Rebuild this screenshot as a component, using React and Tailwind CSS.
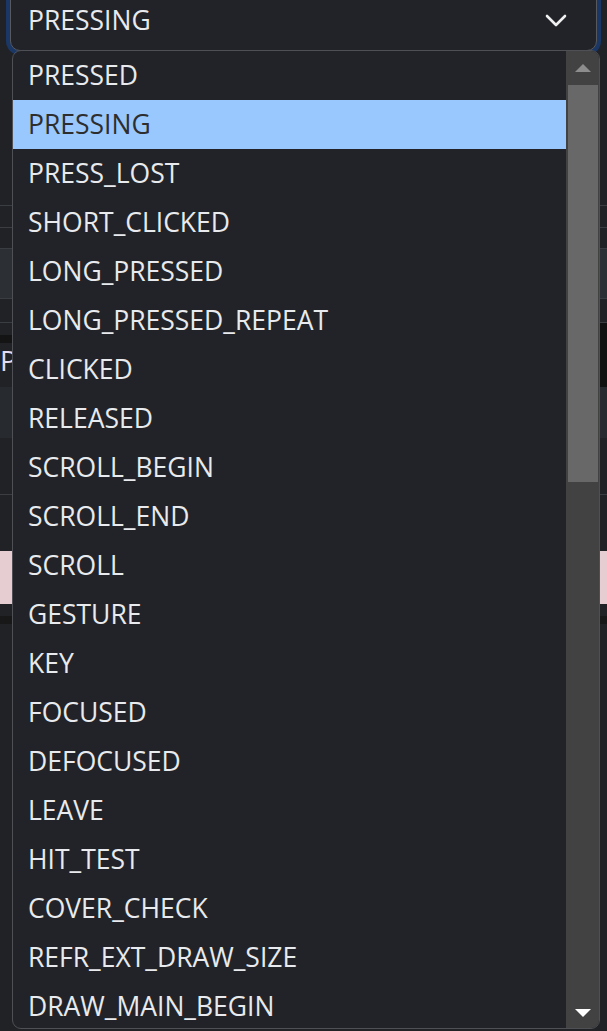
import React from "react";

const items = [
  "PRESSED",
  "PRESSING",
  "PRESS_LOST",
  "SHORT_CLICKED",
  "LONG_PRESSED",
  "LONG_PRESSED_REPEAT",
  "CLICKED",
  "RELEASED",
  "SCROLL_BEGIN",
  "SCROLL_END",
  "SCROLL",
  "GESTURE",
  "KEY",
  "FOCUSED",
  "DEFOCUSED",
  "LEAVE",
  "HIT_TEST",
  "COVER_CHECK",
  "REFR_EXT_DRAW_SIZE",
  "DRAW_MAIN_BEGIN",
];

const font = { fontFamily: '"Open Sans", "Noto Sans", sans-serif' };

export default function App() {
  return (
    <div
      className="relative w-[607px] h-[1031px] overflow-hidden bg-[#202226] text-[#e8eaed]"
      style={font}
    >
      {/* background page */}
      <div className="flex flex-col">
        <div className="pt-[4px] px-[10px]">
          <div className="-mt-[16px] h-[63px] rounded-[10px] border border-[#57595d] bg-[#212328] shadow-[0_0_0_4px_#1b3765] flex items-end justify-between pl-[17px] pr-[29px] pb-[17px]">
            <span className="text-[26.5px] leading-none">PRESSING</span>
            <svg width="22" height="14" viewBox="0 0 22 14" className="mb-[5px]">
              <path d="M2 2 L11 11 L20 2" fill="none" stroke="#f0f0f0" strokeWidth="2.6" strokeLinecap="round" strokeLinejoin="round" />
            </svg>
          </div>
        </div>
        <div className="h-[154px]" />
        <div className="h-[1px] bg-[#3a3d42]" />
        <div className="h-[21px]" />
        <div className="h-[1px] bg-[#3a3d42]" />
        <div className="h-[20px]" />
        <div className="h-[51px] bg-[#2c2f34] border-y border-[#3a3d42]" />
        <div className="h-[23px]" />
        <div className="h-[1px] bg-[#3a3d42]" />
        <div className="flex h-[64px]">
          <div className="w-[12px] flex flex-col">
            <div className="h-[12px]" />
            <div className="h-[8px] bg-[#141414]" />
            <div className="mt-[3px] text-[28px] leading-none text-[#e4dcf2]">P</div>
          </div>
          <div className="flex-1 bg-[#111111]" />
        </div>
        <div className="h-[51px] bg-[#272a2e]" />
        <div className="h-[56px]" />
        <div className="h-[1px] bg-[#3a3d42]" />
        <div className="h-[56px]" />
        <div className="h-[53px] bg-[#e6cdd1]" />
        <div className="h-[12px]" />
        <div className="h-[8px] bg-[#181818]" />
      </div>

      {/* dropdown overlay */}
      <div className="absolute left-[12px] top-[50px] w-[588px] h-[979px] rounded-[9px] border border-[#4e5055] bg-[#212328] overflow-hidden flex">
        <div className="flex-1 flex flex-col">
          {items.map((it, i) => (
            <div
              key={it}
              className={
                i === 1
                  ? "h-[49px] shrink-0 flex items-center pl-[15px] bg-[#99c8ff] text-[#2e2e2e] text-[26.5px]"
                  : "h-[49px] shrink-0 flex items-center pl-[15px] text-[26.5px]"
              }
            >
              {it}
            </div>
          ))}
        </div>
        <div className="w-[33px] bg-[#424242] flex flex-col items-stretch">
          <div className="h-[34px] flex items-center justify-center">
            <svg width="16" height="8" viewBox="0 0 16 8">
              <path d="M8 0 L16 8 L0 8 Z" fill="#8d8d8d" />
            </svg>
          </div>
          <div className="h-[397px] ml-[2px] mr-[1px] bg-[#686868]" />
          <div className="flex-1" />
          <div className="h-[19px] flex items-start justify-center">
            <svg width="16" height="8" viewBox="0 0 16 8">
              <path d="M0 0 L16 0 L8 8 Z" fill="#ffffff" />
            </svg>
          </div>
        </div>
      </div>
    </div>
  );
}
